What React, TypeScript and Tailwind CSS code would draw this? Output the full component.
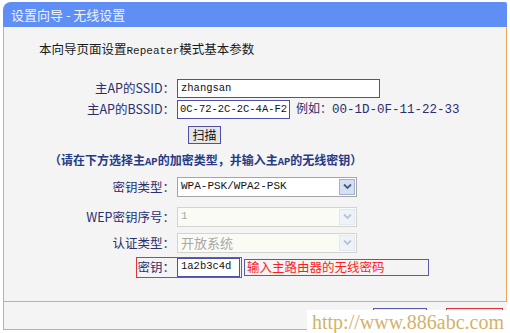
import React from "react";

const FONT = '"Liberation Mono", "Noto Sans CJK SC", monospace';
const CJK = '"Noto Sans CJK SC", "Liberation Sans", sans-serif';

function Chevron({ disabled }: { disabled?: boolean }) {
  return (
    <svg width="9" height="7" viewBox="0 0 9 7">
      <path d="M1 1.5 L4.5 5 L8 1.5" fill="none" stroke={disabled ? "#b8c4d4" : "#4a5a78"} strokeWidth="1.8" />
    </svg>
  );
}

function Select({ value, disabled, cjk }: { value: string; disabled?: boolean; cjk?: boolean }) {
  return (
    <div
      className={`flex h-[20px] w-[180px] items-center border ${disabled ? "border-[#d4d4cc] bg-[#fbfbf6]" : "border-[#a5a5a5] bg-white"}`}
    >
      <div
        className={`flex-1 whitespace-nowrap pl-[3px] leading-none ${cjk ? "text-[13px]" : "text-[11px]"} ${disabled ? "text-[#a8a8a8]" : "text-[#111]"}`}
        style={{ fontFamily: cjk ? CJK : FONT }}
      >
        {value}
      </div>
      <div
        className={`mr-[1px] flex h-[16px] w-[16px] items-center justify-center border ${disabled ? "border-[#e2e8f0] bg-[#eef3fa]" : "border-[#9fb2cf] bg-[#d5e1f2]"}`}
      >
        <Chevron disabled={disabled} />
      </div>
    </div>
  );
}

function Label({ children }: { children: React.ReactNode }) {
  return (
    <div
      className="w-[171px] shrink-0 whitespace-nowrap text-right text-[12.5px] leading-none text-[#2a2f70]"
      style={{ fontFamily: CJK }}
    >
      {children}
    </div>
  );
}

export default function App() {
  return (
    <div className="relative h-[333px] w-[510px] overflow-hidden bg-white" style={{ fontFamily: CJK }}>
      <div className="mx-[3px] mt-[2px] flex h-[25px] items-center rounded-tl-[8px] rounded-tr-[2px] bg-[#5f8ff4] pl-[8px] text-[13px] text-[#eef3ff]">
        设置向导 - 无线设置
      </div>
      <div className="mx-[3px] h-[275px] border-x border-b border-[#f3a551] bg-[#f4f4f4]">
        <div className="whitespace-nowrap pl-[35px] pt-[12px] text-[12.5px] leading-[20px] text-[#1a1a1a]">
          本向导页面设置<span className="text-[11px]" style={{ fontFamily: FONT }}>Repeater</span>模式基本参数
        </div>
        <div className="mt-[18px] flex items-center">
          <Label>主AP的SSID：</Label>
          <div
            className="ml-[2px] flex h-[19px] w-[203px] items-center whitespace-nowrap border border-[#4f4fa8] bg-white pl-[3px] text-[10.5px] text-[#111]"
            style={{ fontFamily: FONT }}
          >
            zhangsan
          </div>
        </div>
        <div className="mt-[1px] flex items-center">
          <Label>主AP的BSSID：</Label>
          <div
            className="ml-[2px] flex h-[19px] w-[113px] items-center overflow-hidden whitespace-nowrap border border-[#4f4fa8] bg-white pl-[2px] text-[10.5px] text-[#111]"
            style={{ fontFamily: FONT }}
          >
            0C-72-2C-2C-4A-F2
          </div>
          <div className="ml-[6px] whitespace-nowrap text-[12px] text-[#2a2f70]">
            例如：<span className="text-[12.5px]" style={{ fontFamily: FONT }}>00-1D-0F-11-22-33</span>
          </div>
        </div>
        <div className="ml-[184px] mt-[6px] flex h-[18px] w-[33px] items-center justify-center border border-[#4f4fa8] bg-[#e6e6e6] text-[12px] text-[#111]">
          扫描
        </div>
        <div className="mt-[6px] whitespace-nowrap pl-[45px] text-[12px] font-bold leading-[20px] text-[#263a86]">
          （请在下方选择主<span className="text-[10.5px]" style={{ fontFamily: FONT }}>AP</span>的加密类型，并输入主<span className="text-[10.5px]" style={{ fontFamily: FONT }}>AP</span>的无线密钥）
        </div>
        <div className="mt-[5px] flex items-center">
          <Label>密钥类型：</Label>
          <div className="ml-[2px]">
            <Select value="WPA-PSK/WPA2-PSK" />
          </div>
        </div>
        <div className="mt-[10px] flex items-center">
          <Label>WEP密钥序号：</Label>
          <div className="ml-[2px]">
            <Select value="1" disabled />
          </div>
        </div>
        <div className="mt-[6px] flex items-center">
          <Label>认证类型：</Label>
          <div className="ml-[2px]">
            <Select value="开放系统" disabled cjk />
          </div>
        </div>
        <div className="relative mt-[4px] flex h-[21px] items-center">
          <div className="absolute left-[132px] top-0 h-[21px] w-[106px] border border-[#e0323a]" />
          <Label>密钥：</Label>
          <div
            className="ml-[2px] flex h-[19px] w-[63px] items-center whitespace-nowrap border border-[#4f4fa8] bg-white pl-[3px] text-[10.5px] text-[#111]"
            style={{ fontFamily: FONT }}
          >
            1a2b3c4d
          </div>
          <div className="ml-[4px] flex h-[17px] w-[185px] items-center whitespace-nowrap border border-[#5a5ab0] pl-[2px] text-[12.5px] text-[#ff1e1e]">
            输入主路由器的无线密码
          </div>
        </div>
      </div>
      <div className="relative mx-[3px] h-[28px] border-b border-l border-[#f3a551] bg-[#f4f4f4]">
        <div className="absolute left-[369px] top-[6px] h-[20px] w-[54px] border border-[#5a5ab0] bg-[#ececec]" />
        <div className="absolute left-[442px] top-[6px] h-[20px] w-[57px] border border-[#e0323a] bg-[#ececec]" />
      </div>
      <div
        className="absolute left-[307px] top-[310px] flex h-[23px] w-[203px] items-center bg-white pl-[5px] text-[20px] leading-none text-[#d3b26b]"
        style={{ fontFamily: '"Liberation Serif", serif' }}
      >
        http://www.886abc.com
      </div>
    </div>
  );
}
